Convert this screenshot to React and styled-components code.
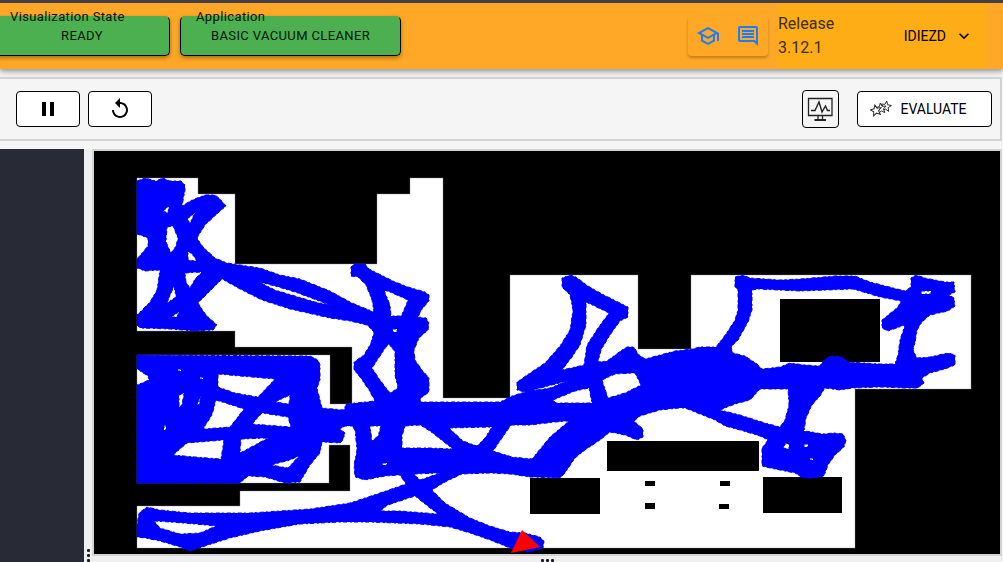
import React from "react";
import styled, { createGlobalStyle } from "styled-components";

const Global = createGlobalStyle`
  * { box-sizing: border-box; }
  body {
    margin: 0;
    background: #f5f5f5;
    font-family: Roboto, "Liberation Sans", sans-serif;
    color: #000;
  }
`;

const Page = styled.div`
  display: flex;
  flex-direction: column;
  min-height: 100vh;
  overflow: hidden;
`;

const Header = styled.header`
  display: flex;
  justify-content: space-between;
  height: 69px;
  padding-right: 17px;
  border-top: 3px solid #424046;
  background: #ffa726;
  box-shadow: 0 2px 4px rgba(0, 0, 0, 0.3), 0 4px 8px rgba(0, 0, 0, 0.12);
`;

const States = styled.div`
  display: flex;
  align-items: center;
  gap: 10px;
  margin-left: -6px;
`;

const StateButton = styled.button`
  position: relative;
  height: 40px;
  min-width: 176px;
  padding: 0 30px;
  border: 1px solid #000;
  border-top-color: #4caf50;
  border-radius: 5px;
  background: #4caf50;
  box-shadow: 0 2px 4px rgba(0, 0, 0, 0.35);
  font: 400 13px/20px Roboto, sans-serif;
  letter-spacing: 0.02857em;
  color: #04140a;
`;

const StateLabel = styled.span`
  position: absolute;
  top: -10px;
  left: 15px;
  white-space: nowrap;
`;

const HeaderRight = styled.div`
  display: flex;
  align-items: center;
  gap: 10px;
`;

const IconGroup = styled.div`
  display: flex;
  height: 40px;
  border-radius: 4px;
  box-shadow: 0 2px 3px rgba(0, 0, 0, 0.25);
`;

const IconButton = styled.button`
  display: grid;
  place-items: center;
  width: 40px;
  padding: 0;
  border: 0;
  background: none;
  color: #1e7df5;
`;

const Account = styled.div`
  display: flex;
  align-items: center;
  justify-content: space-between;
  width: 208px;
  height: 100%;
  padding-right: 12px;
  background: #ffad16;
`;

const Release = styled.p`
  width: 64px;
  margin: 0;
  font-size: 16px;
  line-height: 24px;
  color: #402b06;
`;

const UserButton = styled.button`
  display: flex;
  align-items: center;
  gap: 8px;
  padding: 0;
  border: 0;
  background: none;
  font: 400 14px/24px Roboto, sans-serif;
  color: #000;
`;

const Toolbar = styled.section`
  display: flex;
  align-items: center;
  justify-content: space-between;
  height: 64px;
  margin: 8px 1px 8px 0;
  padding: 0 8px 0 16px;
  border: 2px solid #d3d3d3;
  border-left: 0;
`;

const Tools = styled.div`
  display: flex;
  align-items: center;
  gap: ${(p) => p.$gap}px;
`;

const ToolButton = styled.button`
  display: flex;
  align-items: center;
  justify-content: center;
  gap: 8px;
  width: ${(p) => p.$width}px;
  height: ${(p) => p.$height || 36}px;
  padding: 0 ${(p) => p.$padEnd || 0}px 0 0;
  border: 1px solid #000;
  border-radius: 4px;
  background: ${(p) => (p.$plain ? "transparent" : "#fff")};
  font: 400 14px/24px Roboto, sans-serif;
  color: #000;
`;

const Workspace = styled.main`
  display: flex;
  flex: 1;
  margin-right: 1px;
`;

const Sidebar = styled.aside`
  width: 84px;
  background: #282a36;
`;

const Gutter = styled.div`
  display: flex;
  flex-direction: ${(p) => (p.$vertical ? "column" : "row")};
  align-items: center;
  justify-content: ${(p) => (p.$vertical ? "flex-end" : "center")};
  gap: 2px;
  flex: none;
  width: ${(p) => (p.$vertical ? "8px" : "auto")};
  height: ${(p) => (p.$vertical ? "auto" : "6px")};
  padding-top: ${(p) => (p.$vertical ? 0 : 2)}px;
  background: #efefef;
`;

const Dot = styled.span`
  width: 3px;
  height: 3px;
  border-radius: 1px;
  background: #1c1c24;
`;

const Stage = styled.div`
  display: flex;
  flex-direction: column;
  flex: 1;
  min-width: 0;
`;

const MapPanel = styled.div`
  flex: 1;
  border: 2px solid #d3d3d3;
  background: #000;
`;

const MapDrawing = styled.svg`
  display: block;
  width: 100%;
  height: auto;
`;

const FLOOR =
  "M137 178H198V194H235V264H377V194H410V178H443V398H510V275H638V349H691V275H971V389H855V548H137V506H240V491H350V445H329V483H137V355H330V404H352V347H235V331H137Z";

const OBSTACLES = [
  [780, 299, 100, 63],
  [607, 441, 152, 30],
  [530, 478, 70, 36],
  [763, 477, 79, 36],
  [645, 481, 10, 5],
  [720, 481, 10, 5],
  [645, 503, 10, 6],
  [719, 504, 10, 5],
];

/* Outer edge of the cleaned track, clockwise from the first room. */
const TRACK =
  "M137 181L145 178L156 181L163 178L170 181L181 181L185 185V190L182 206L192 200L205 195H215L220 199L226 206L218 213L205 225L197 238L203 247L215 258L227 263L260 268L280 275L300 279L330 291L352 303L374 312L372 300L366 285L358 277L351 276V267L354 264H365L369 269L393 281L408 287L425 292L429 295V301L422 309L418 317L426 318L429 323L428 330L419 338L414 350L415 360L422 370L429 378V392L421 398L420 402H500L512 396L525 392L517 390V382L530 373L545 363L560 346L570 330L573 310L570 295L562 287V278L570 275L576 277L588 286L602 294L620 303L628 307V317L620 321L610 335L601 350L598 362L607 361L622 350L627 347H634L638 354L645 359L660 355L675 351L692 349L700 347H716L726 334L735 320L738 310V290L735 287V277L743 275L750 278L780 280L800 279L835 276H855L870 282L905 291L911 287V278L916 275L925 278L945 282H954L955 292L949 295L954 298L955 306L948 311L930 315L922 322L917 330L915 343L913 350L917 358L930 357L948 353L955 355V365L945 369L930 373L922 378L924 383L918 388H905L880 387L853 388L840 390L825 388L820 396L812 405L806 418L804 431L812 432L822 434L835 433L843 434L846 440L844 447L835 455L828 465L824 476L815 478H803L795 473L770 468L762 466V448L768 440L760 436L740 430L725 426L715 420L700 414L685 408H679L660 410L640 416L634 421L643 429V437L637 440L625 435L610 432L600 440L585 450L575 458L565 473L560 478L530 477L510 474L490 473L462 474L445 482L432 490L445 503L470 518L490 526L510 532L525 533L540 537L544 541L543 548L530 552L510 548L490 540L470 533L450 527L420 524L370 522H340L300 524L260 531L230 538L205 546L190 551L180 547L160 541L145 538L137 537V525L139 513L147 507L160 510L190 513H250L310 509L350 503L380 493L406 484L400 475L385 476L365 480L355 477L354 465L357 450L355 430L352 426H345L340 429L345 433L343 440L340 443L322 442L320 453L310 465L300 482L285 483L265 477L248 476L240 483H137V385L149 380L148 376L137 369V355L310 356L318 360L320 365V380L317 388L322 408L344 410L346 404L375 401L369 390L360 377L354 370V362L364 355L371 343L374 332L367 325L350 321L330 318L290 309L262 300L240 289L222 279L210 291L198 303L206 315L217 325L213 330L195 331L170 329L140 328L137 325V315L150 302L157 290L160 270L145 271L137 268V259L148 246V238L137 234Z";

/* Patches inside the track that the robot has not passed over. */
const GAPS = [
  "M163 211L169 206L168 213Z",
  "M167 227L173 226L178 238L176 246L171 253L166 242Z",
  "M187 219L195 213L190 223Z",
  "M188 251L192 254L197 261L188 260Z",
  "M185 273L202 272L195 279L190 288L186 282Z",
  "M174 286L176 297L167 303Z",
  "M171 317L179 312L177 317Z",
  "M259 282L275 286L295 292L330 305L315 302L275 290Z",
  "M384 290L390 292L408 300L404 310L401 316H391L390 305Z",
  "M392 329H397V332H393Z",
  "M389 344L395 352V375L398 388L390 393L380 380L372 368L378 359L386 347Z",
  "M586 302L609 313L598 328L587 345L584 365L562 370L572 357L580 345L586 325Z",
  "M530 391L548 386L567 381L550 388Z",
  "M553 400L575 391L589 388L592 403H556Z",
  "M602 380L615 374L635 373L641 385L625 393L608 398Z",
  "M752 290L758 289L800 291L853 289L880 297L901 301L898 307L882 320V328L888 331L905 325L900 340L898 355L895 364L880 364L848 362L842 357L830 356L823 361L820 366L805 365L790 363L780 367L762 369L757 364L745 356L733 353L731 347L738 340L748 322L752 310Z",
  "M921 291H931V294H921Z",
  "M720 410L735 404L750 400L760 389H788L789 405L785 420L780 427L765 423L740 415Z",
  "M786 443L789 444V449L783 448Z",
  "M804 444H808V447H804Z",
  "M810 458H813V460H810Z",
  "M370 426H381L378 436L372 441Z",
  "M405 426L420 425L430 431L453 449L430 448H402V436Z",
  "M449 428L492 427L485 438L477 446L463 441Z",
  "M511 425H530L555 422L569 421L550 437L532 459L512 457L493 451Z",
  "M414 474L440 473L420 480Z",
  "M380 511L388 505L415 496L425 504L438 514L400 511Z",
  "M154 521L170 522L195 524L216 526L200 533L180 534L160 528Z",
  "M218 374L240 376L275 379L258 397L235 393L218 387Z",
  "M216 400L244 409L230 427L203 429L212 415Z",
  "M275 402L290 395L289 404Z",
  "M252 424L262 413L288 417L291 427Z",
  "M173 455L187 443L224 440L221 459L195 457Z",
  "M241 439L268 438L240 453Z",
  "M271 465L290 460L299 456L288 468Z",
  "M179 395L184 393L182 405L179 407Z",
  "M197 404L201 396L199 405Z",
  "M164 425H166V430H164Z",
  "M178 369H181V371H178Z",
  "M200 377H203V379H200Z",
  "M382 463H387V465H382Z",
].join("");

function FloorMap() {
  return (
    <MapDrawing viewBox="94 151 906 403" role="img" aria-label="Vacuum cleaner map">
      <path d={FLOOR} fill="#fff" stroke="#8a8a8a" strokeWidth=".4" />
      {OBSTACLES.map(([x, y, w, h]) => (
        <rect key={`${x}-${y}`} x={x} y={y} width={w} height={h} />
      ))}
      <path
        d={TRACK + GAPS}
        fill="#00f"
        fillRule="evenodd"
        stroke="#00f"
        strokeWidth="1"
        strokeDasharray="4 2 2 3"
      />
      <path d="M522 530L540 547L511 553Z" fill="#f00" />
    </MapDrawing>
  );
}

const Icon = ({ d, size = 24 }) => (
  <svg width={size} height={size} viewBox="0 0 24 24" fill="currentColor" aria-hidden="true">
    <path d={d} />
  </svg>
);

const SCHOOL =
  "M12 3 1 9l4 2.18v6L12 21l7-3.82v-6l2-1.09V17h2V9L12 3zm6.82 6L12 12.72 5.18 9 12 5.28 18.82 9zM17 15.99l-5 2.73-5-2.73v-3.72L12 15l5-2.73v3.72z";
const COMMENT =
  "M21.99 4c0-1.1-.89-2-1.99-2H4c-1.1 0-2 .9-2 2v12c0 1.1.9 2 2 2h14l4 4-.01-18zM20 4v13.17L18.83 16H4V4h16zM6 12h12v2H6zm0-3h12v2H6zm0-3h12v2H6z";
const CHEVRON = "M7.41 8.59 12 13.17l4.59-4.58L18 10l-6 6-6-6z";
const PAUSE = "M6 19h4V5H6v14zm8-14v14h4V5h-4z";
const REPLAY =
  "M12 5V1L7 6l5 5V7c3.31 0 6 2.69 6 6s-2.69 6-6 6-6-2.69-6-6H4c0 4.42 3.58 8 8 8s8-3.58 8-8-3.58-8-8-8z";
const STAR = "M0-6L1.6-2.2L5.8-1.9L2.6.9L3.6 5L0 2.8L-3.6 5L-2.6.9L-5.8-1.9L-1.6-2.2Z";

const MonitorIcon = () => (
  <svg width="27" height="26" viewBox="0 0 27 26" fill="none" stroke="#222" aria-hidden="true">
    <path d="M1.500 2.500H25V19.500H1.500ZM11 20V23M15.500 20V23" strokeWidth="1.300" />
    <path d="M7.500 24H19" strokeWidth="2" />
    <path d="M4 14.500H8L12 6L15 16L18.500 10L20.500 14.500H23" strokeWidth="1.400" />
  </svg>
);

const StarsIcon = () => (
  <svg width="22" height="18" viewBox="0 0 22 18" fill="#fff" stroke="#222" aria-hidden="true">
    <path d={STAR} transform="translate(16 6.500) rotate(8) scale(.9)" />
    <path d={STAR} transform="translate(11 8.500) rotate(-8) scale(.9)" />
    <path d={STAR} transform="translate(6 10.500) rotate(-12) scale(.95)" />
  </svg>
);

const Dots = () => (
  <>
    <Dot />
    <Dot />
    <Dot />
  </>
);

export default function App() {
  return (
    <Page>
      <Global />
      <Header>
        <States>
          <StateButton>
            <StateLabel>Visualization State</StateLabel>
            READY
          </StateButton>
          <StateButton>
            <StateLabel>Application</StateLabel>
            BASIC VACUUM CLEANER
          </StateButton>
        </States>
        <HeaderRight>
          <IconGroup>
            <IconButton aria-label="Theory">
              <Icon d={SCHOOL} />
            </IconButton>
            <IconButton aria-label="Forum">
              <Icon d={COMMENT} />
            </IconButton>
          </IconGroup>
          <Account>
            <Release>Release 3.12.1</Release>
            <UserButton>
              IDIEZD
              <Icon d={CHEVRON} size={20} />
            </UserButton>
          </Account>
        </HeaderRight>
      </Header>
      <Toolbar>
        <Tools $gap={8}>
          <ToolButton $width={64} aria-label="Pause">
            <Icon d={PAUSE} />
          </ToolButton>
          <ToolButton $width={64} aria-label="Reset">
            <Icon d={REPLAY} />
          </ToolButton>
        </Tools>
        <Tools $gap={18}>
          <ToolButton $width={37} $height={38} $plain aria-label="Monitoring">
            <MonitorIcon />
          </ToolButton>
          <ToolButton $width={135} $padEnd={12}>
            <StarsIcon />
            EVALUATE
          </ToolButton>
        </Tools>
      </Toolbar>
      <Workspace>
        <Sidebar />
        <Gutter $vertical>
          <Dots />
        </Gutter>
        <Stage>
          <MapPanel>
            <FloorMap />
          </MapPanel>
          <Gutter>
            <Dots />
          </Gutter>
        </Stage>
      </Workspace>
    </Page>
  );
}
